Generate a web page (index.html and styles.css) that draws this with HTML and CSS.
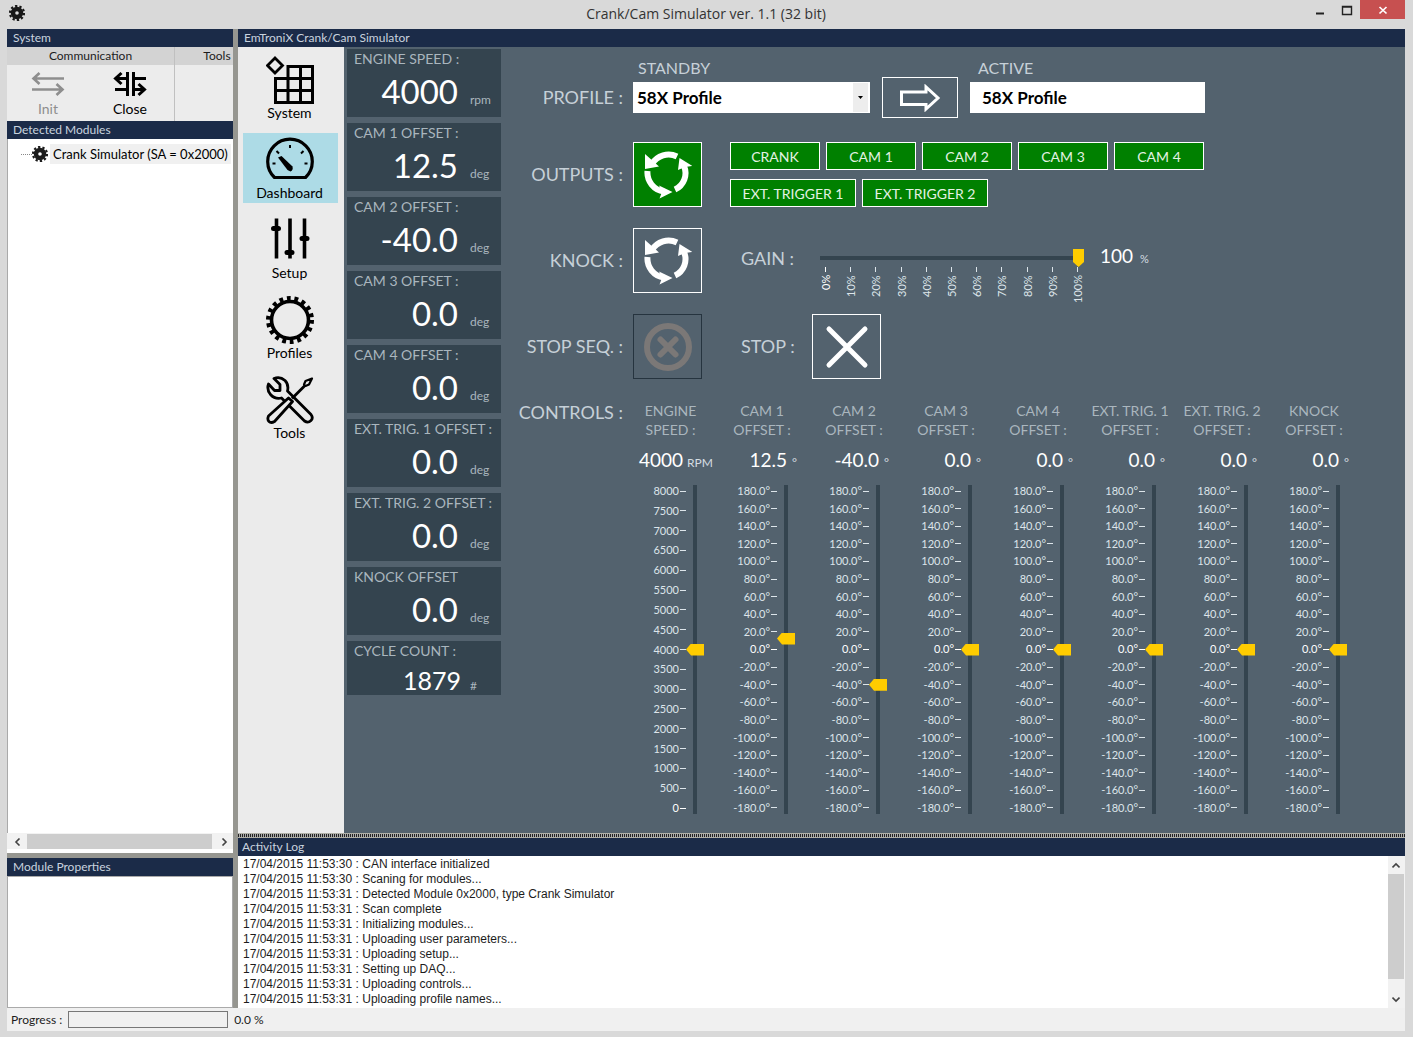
FILE: index.html
```html
<!DOCTYPE html>
<html lang="en">
<head>
<meta charset="utf-8">
<title>Crank/Cam Simulator ver. 1.1 (32 bit)</title>
<link rel="stylesheet" href="styles.css">
</head>
<body class="window">
<svg class="defs" aria-hidden="true">
  <symbol id="i-cog" viewBox="0 0 16 16">
    <circle cx="8" cy="8" r="4" fill="none" stroke="currentColor" stroke-width="4.4"/>
    <circle cx="8" cy="8" r="7" fill="none" stroke="currentColor" stroke-width="2.2" stroke-dasharray="2.3 2.1"/>
  </symbol>
  <symbol id="i-cycle" viewBox="0 0 48 48">
    <g fill="none" stroke="currentColor" stroke-width="6">
      <path d="M33 5.500A19.500 19.500 0 0 0 8 13"/>
      <path d="M3.500 20A19 19 0 0 0 20 40.500"/>
      <path d="M31 38.500A18 18 0 0 0 40 15"/>
    </g>
    <path fill="currentColor" d="M1 3V18L15 15.500L10 11ZM15 34.500L28.500 41L15.500 47.500L18 41ZM35.500 7L48.500 15L41 16L34 19Z"/>
  </symbol>
</svg>

<header class="titlebar">
  <svg class="app-icon" width="16" height="16"><use href="#i-cog"/></svg>
  <h1 class="title">Crank/Cam Simulator ver. 1.1 (32 bit)</h1>
  <div class="window-buttons">
    <button class="wbtn" aria-label="Minimize"><svg width="12" height="12"><path d="M2 9.500H10" stroke="#222" stroke-width="2"/></svg></button>
    <button class="wbtn" aria-label="Maximize"><svg width="12" height="12"><path d="M1.500 2.500H10.500V10.500H1.500ZM1 3H11" fill="none" stroke="#222" stroke-width="1.400"/></svg></button>
    <button class="wbtn wbtn-close" aria-label="Close window"><svg width="12" height="12"><path d="M2.500 3L9.500 9.500M9.500 3L2.500 9.500" stroke="#fff" stroke-width="1.700"/></svg></button>
  </div>
</header>

<div class="workspace">
  <aside class="left">
    <h2 class="bar">System</h2>
    <div class="toolbar">
      <section class="tool-group tool-comm">
        <h3 class="tool-title">Communication</h3>
        <div class="tool-row">
          <button class="tool" disabled>
            <svg width="34" height="28" viewBox="0 0 34 28"><path d="M2 8.500H33M8.500 3L2.500 8.500L8.500 14M1 19.500H32M25.500 14L31.500 19.500L25.500 25" fill="none" stroke="currentColor" stroke-width="2.600"/></svg>
            Init
          </button>
          <button class="tool">
            <svg width="34" height="28" viewBox="0 0 34 28"><path d="M2 8.500H14M8.500 3L2.500 8.500L8.500 14M2 19.500H14M14.500 2V26M20.500 2V26M20 8.500H33M20 19.500H31M25.500 14L31.500 19.500L25.500 25" fill="none" stroke="currentColor" stroke-width="3"/></svg>
            Close
          </button>
        </div>
      </section>
      <section class="tool-group tool-more">
        <h3 class="tool-title">Tools</h3>
      </section>
    </div>
    <h2 class="bar">Detected Modules</h2>
    <div class="tree">
      <div class="tree-item">
        <span class="tree-line"></span>
        <svg width="16" height="16"><use href="#i-cog"/></svg>
        <span class="tree-text">Crank Simulator (SA = 0x2000)</span>
      </div>
    </div>
    <div class="hscroll">
      <button class="sbtn" aria-label="Scroll left"><svg width="8" height="8"><path d="M5.500 .5L2 4L5.500 7.500" fill="none" stroke="#444" stroke-width="1.600"/></svg></button>
      <div class="hthumb"></div>
      <button class="sbtn" aria-label="Scroll right"><svg width="8" height="8"><path d="M2.500 .5L6 4L2.500 7.500" fill="none" stroke="#444" stroke-width="1.600"/></svg></button>
    </div>
    <div class="hsplit"></div>
    <h2 class="bar">Module Properties</h2>
    <div class="props"></div>
  </aside>

  <div class="right">
    <h2 class="bar bar-main">EmTroniX Crank/Cam Simulator</h2>
    <main class="module">
      <nav class="nav">
        <a class="nav-item" href="#system">
          <svg width="48" height="48" viewBox="0 0 48 48" fill="none" stroke="currentColor"><path d="M9 2L16.500 9.500L9 17L1.500 9.500Z" stroke-width="2.800"/><path d="M22 10.500H46.500V47M10 22.500H46.500M10 34.500H46.500M22 9V47M34.500 10V47M9.500 21V47M8 46.500H48" stroke-width="3"/></svg>
          System</a>
        <a class="nav-item nav-active" href="#dashboard" aria-current="page">
          <svg width="48" height="48" viewBox="0 0 48 48" fill="none" stroke="currentColor"><path d="M8.500 41.500A22.300 22.300 0 1 1 39.500 41.500Z" stroke-width="3.200" stroke-linejoin="round"/><path d="M6.500 27.500H9.500M38.500 27.500H41.500M24 9V12M10.500 15L13 17.500M37.500 15L35 17.500" stroke-width="2"/><path d="M12 21.500L15.500 20L26.500 30.500Q27.500 34 24.500 35.500L21.500 34Z" fill="currentColor" stroke="none"/></svg>
          Dashboard</a>
        <a class="nav-item" href="#setup">
          <svg width="48" height="48" viewBox="0 0 48 48" stroke="currentColor"><path d="M10.500 2.500V42.500M24 2.500V42.500M38.500 2.500V42.500" stroke-width="3.600"/><path d="M7.500 12.500H12.500M21 36.500H26M36 22.500H41" stroke-width="5" stroke-linecap="round"/></svg>
          Setup</a>
        <a class="nav-item" href="#profiles">
          <svg width="48" height="48" viewBox="0 0 48 48" fill="none" stroke="currentColor"><circle cx="24" cy="24" r="18.500" stroke-width="3.600"/><circle cx="24" cy="24" r="21.500" stroke-width="5" stroke-dasharray="3.755 3.750"/></svg>
          Profiles</a>
        <a class="nav-item" href="#tools">
          <svg width="48" height="48" viewBox="0 0 48 48" fill="none" stroke="currentColor" stroke-width="2.800" stroke-linejoin="round"><path d="M8 2.500Q14 0 19 4.500Q23 8.500 21.500 15L45 38.500Q47.500 42 45 44.500Q42 47.500 38.500 45L15.500 22Q9 23.500 4.500 18.500Q.5 13.500 2.500 8L8.500 14.500H14V8.500Z"/><path d="M46 2.500L39.500 5L38 8.500L39.500 10L43 8.500Z" stroke-width="2.200"/><path d="M39 9.500L26 22.500" /><path d="M22.500 22L2.500 40Q1 43.500 3 45.500Q5 47.500 8.500 45.500L26.500 25.500Z" fill="#ebebeb"/></svg>
          Tools</a>
      </nav>

      <div class="readouts">
        <section class="card"><h3>ENGINE SPEED :</h3><p><output>4000</output><small>rpm</small></p></section>
        <section class="card"><h3>CAM 1 OFFSET :</h3><p><output>12.5</output><small>deg</small></p></section>
        <section class="card"><h3>CAM 2 OFFSET :</h3><p><output>-40.0</output><small>deg</small></p></section>
        <section class="card"><h3>CAM 3 OFFSET :</h3><p><output>0.0</output><small>deg</small></p></section>
        <section class="card"><h3>CAM 4 OFFSET :</h3><p><output>0.0</output><small>deg</small></p></section>
        <section class="card"><h3>EXT. TRIG. 1 OFFSET :</h3><p><output>0.0</output><small>deg</small></p></section>
        <section class="card"><h3>EXT. TRIG. 2 OFFSET :</h3><p><output>0.0</output><small>deg</small></p></section>
        <section class="card"><h3>KNOCK OFFSET</h3><p><output>0.0</output><small>deg</small></p></section>
        <section class="card card-count"><h3>CYCLE COUNT :</h3><p><output>1879</output><small>#</small></p></section>
      </div>

      <div class="dash">
        <div class="line line-profile">
          <span class="label">PROFILE :</span>
          <div class="profile">
            <label class="caption" for="standby">STANDBY</label>
            <label class="caption caption-active" for="active">ACTIVE</label>
            <div class="combo">
              <select id="standby" class="field"><option>58X Profile</option></select>
              <span class="combo-arrow"><svg width="5" height="3"><path d="M0 0H5L2.500 3Z"/></svg></span>
            </div>
            <button class="box box-apply" aria-label="Apply profile"><svg width="42" height="28" viewBox="0 0 42 28"><path d="M2.500 8H27V3L39 14L27 25V20.500H2.500Z" fill="none" stroke="currentColor" stroke-width="3"/></svg></button>
            <input id="active" class="field field-active" readonly value="58X Profile">
          </div>
        </div>

        <div class="line">
          <span class="label">OUTPUTS :</span>
          <button class="box box-on" aria-label="Outputs"><svg width="48" height="48"><use href="#i-cycle"/></svg></button>
          <div class="chips">
            <button class="chip">CRANK</button><button class="chip">CAM 1</button><button class="chip">CAM 2</button><button class="chip">CAM 3</button><button class="chip">CAM 4</button>
            <button class="chip chip-wide">EXT. TRIGGER 1</button><button class="chip chip-wide">EXT. TRIGGER 2</button>
          </div>
        </div>

        <div class="line line-knock">
          <span class="label">KNOCK :</span>
          <button class="box" aria-label="Knock"><svg width="48" height="48"><use href="#i-cycle"/></svg></button>
          <div class="gain">
            <label class="side" for="gain">GAIN :</label>
            <div class="gain-scale">
              <input id="gain" class="hslider" type="range" min="0" max="100" value="100">
              <ol class="hticks"></ol>
            </div>
            <p class="gain-value"><output>100</output><small>%</small></p>
          </div>
        </div>

        <div class="line">
          <span class="label">STOP SEQ. :</span>
          <button class="box box-off" disabled aria-label="Stop sequence"><svg width="48" height="48" viewBox="0 0 48 48" fill="none" stroke="currentColor"><circle cx="24" cy="24" r="21" stroke-width="6"/><path d="M16.500 16.500L31.500 31.500M31.500 16.500L16.500 31.500" stroke-width="6" stroke-linecap="round"/></svg></button>
          <span class="side side-stop">STOP :</span>
          <button class="box" aria-label="Stop"><svg width="48" height="48" viewBox="0 0 48 48"><path d="M6 6L42 42M42 6L6 42" stroke="currentColor" stroke-width="5" stroke-linecap="round"/></svg></button>
        </div>

        <div class="line line-controls">
          <span class="label">CONTROLS :</span>
          <div class="controls"></div>
        </div>
      </div>
    </main>
    <div class="grip"></div>
    <h2 class="bar bar-log">Activity Log</h2>
    <div class="log">
      <ul class="log-lines">
        <li>17/04/2015 11:53:30 : CAN interface initialized</li>
        <li>17/04/2015 11:53:30 : Scaning for modules...</li>
        <li>17/04/2015 11:53:31 : Detected Module 0x2000, type Crank Simulator</li>
        <li>17/04/2015 11:53:31 : Scan complete</li>
        <li>17/04/2015 11:53:31 : Initializing modules...</li>
        <li>17/04/2015 11:53:31 : Uploading user parameters...</li>
        <li>17/04/2015 11:53:31 : Uploading setup...</li>
        <li>17/04/2015 11:53:31 : Setting up DAQ...</li>
        <li>17/04/2015 11:53:31 : Uploading controls...</li>
        <li>17/04/2015 11:53:31 : Uploading profile names...</li>
      </ul>
      <div class="vscroll">
        <button class="sbtn" aria-label="Scroll up"><svg width="8" height="8"><path d="M.5 5.500L4 2L7.500 5.500" fill="none" stroke="#444" stroke-width="1.600"/></svg></button>
        <div class="vthumb"></div>
        <button class="sbtn" aria-label="Scroll down"><svg width="8" height="8"><path d="M.5 2.500L4 6L7.500 2.500" fill="none" stroke="#444" stroke-width="1.600"/></svg></button>
      </div>
    </div>
  </div>
</div>

<footer class="status">
  <label for="progress">Progress :</label>
  <progress id="progress" max="100" value="0"></progress>
  <span>0.0 %</span>
</footer>
<script src="app.js"></script>
</body>
</html>
```

FILE: styles.css
```css
* { box-sizing: border-box; }

:root {
  --navy: #1b2b48;
  --slate: #53626e;
  --dark: #34444f;
  --paper: #ececec;
  --split: #969690;
  --green: #008000;
  --gold: #ffcc00;
}

h1, h2, h3, p, ul, ol { margin: 0; padding: 0; font-weight: 400; list-style: none; }

button {
  padding: 0;
  border: 0;
  background: none;
  font: inherit;
  color: inherit;
}

svg { display: block; flex: none; }
.defs { display: none; }

.window {
  display: flex;
  flex-direction: column;
  min-height: 100vh;
  margin: 0;
  padding: 0 8px 7px 7px;
  background: #d9d9d9;
  font-family: Lato, "Noto Sans", sans-serif;
  font-size: 12px;
  color: #1c1c1c;
}

/* Title bar */
.titlebar {
  display: grid;
  grid-template-columns: 1fr auto 1fr;
  height: 29px;
}
.app-icon { margin: 5px 0 0 2px; color: #181818; }
.title {
  font: 14px/28px "Open Sans", sans-serif;
  color: #333;
}
.window-buttons { display: flex; justify-content: flex-end; align-items: flex-start; }
.wbtn { display: grid; place-items: center; width: 27px; height: 19px; }
.wbtn-close { width: 45px; background: #c75050; }

/* Frame */
.workspace {
  display: grid;
  grid-template-columns: 226px minmax(0, 1fr);
  column-gap: 5px;
  flex: 1;
  background: var(--split);
}
.left, .right { display: flex; flex-direction: column; min-width: 0; }

.bar {
  flex: none;
  height: 18px;
  padding-left: 6px;
  background: var(--navy);
  font-size: 12px;
  line-height: 18px;
  color: #c9d3df;
}
.bar-log { padding-left: 4px; }

.toolbar {
  display: flex;
  height: 74px;
  overflow: hidden;
  background: var(--paper);
}
.tool-group { flex: none; }
.tool-comm { width: 168px; border-right: 1px solid #c0c0c0; }
.tool-more { width: 84px; }
.tool-title { background: #d3d3d3; font-size: 12px; line-height: 18px; text-align: center; }
.tool-row { display: flex; }
.tool {
  display: flex;
  flex-direction: column;
  align-items: center;
  gap: 2px;
  width: 82px;
  padding-top: 5px;
  font-size: 14px;
  line-height: 18px;
  color: #000;
}
.tool:disabled { color: #8e8e8e; }

.tree { flex: 1; border-left: 1px solid #aaa; background: #fff; overflow: hidden; }
.tree-item { display: flex; align-items: center; margin: 5px 0 0 13px; height: 20px; }
.tree-line { flex: none; width: 11px; border-top: 1px dotted #888; }
.tree-text {
  margin-left: 2px;
  padding: 0 3px;
  background: #f0f0f0;
  font-size: 13px;
  line-height: 20px;
  white-space: nowrap;
  color: #000;
}

.sbtn { display: grid; place-items: center; width: 16px; height: 16px; flex: none; }
.hscroll { display: flex; height: 20px; padding: 1px 1px 0 3px; background: #f2f2f2; border-bottom: 4px solid #fff; }
.hthumb { flex: 1; background: #cdcdcd; margin: 0 4px 0 1px; }
.hsplit { height: 5px; }
.props { height: 132px; border: 1px solid #aaa; background: #fff; }

/* Module */
.module {
  display: grid;
  grid-template-columns: 106px 154px minmax(0, 1fr);
  column-gap: 3px;
  flex: 1;
  background: var(--slate);
}

.nav {
  display: flex;
  flex-direction: column;
  gap: 10px;
  padding: 6px 6px 0 5px;
  background: #ebebeb;
}
.nav-item {
  display: flex;
  flex-direction: column;
  align-items: center;
  height: 70px;
  padding: 3px 2px 0 0;
  font-size: 14px;
  line-height: 17px;
  color: #000;
  text-decoration: none;
}
.nav-active { background: #addbe6; }

.readouts { display: flex; flex-direction: column; gap: 6px; padding-top: 2px; }
.card { height: 68px; padding: 0 6px 0 7px; background: var(--dark); }
.card h3 { font-size: 14px; line-height: 20px; white-space: nowrap; color: #aab6be; }
.card p { display: flex; align-items: baseline; line-height: 44px; }
.card output { width: 104px; text-align: right; font-size: 33px; color: #fff; }
.card small { margin-left: 12px; font-size: 12px; color: #aab6be; }
.card-count { height: 54px; }
.card-count p { line-height: 38px; }
.card-count output { width: 107px; font-size: 25px; }
.card-count small { margin-left: 9px; }

.dash { padding: 11px 0 19px; }
.line { display: flex; margin-bottom: 21px; }
.label {
  flex: none;
  width: 119px;
  margin-right: 10px;
  text-align: right;
  font-size: 18px;
  line-height: 65px;
  color: #c6d0d8;
}

.line-profile { margin-bottom: 24px; }
.line-profile .label { padding-top: 19px; line-height: 41px; }
.line-knock { height: 65px; }
.profile {
  display: grid;
  grid-template-columns: 237px 76px 235px;
  grid-template-rows: 19px 41px;
  column-gap: 12px;
  align-items: center;
}
.caption { padding-left: 5px; font-size: 16px; line-height: 19px; color: #c6d0d8; }
.caption-active { grid-column: 3; padding-left: 8px; }
.combo { display: grid; }
.combo > * { grid-area: 1 / 1; }
.combo-arrow {
  justify-self: end;
  display: grid;
  place-items: center;
  width: 15px;
  margin: 1px 2px;
  background: #ededed;
  pointer-events: none;
}
.field {
  width: 100%;
  height: 31px;
  padding: 0 4px;
  border: 0;
  border-radius: 0;
  appearance: none;
  background: #fff;
  font: bold 17px Lato, "Noto Sans", sans-serif;
  color: #000;
}
.field-active { padding-left: 12px; }

.box {
  display: grid;
  place-items: center;
  flex: none;
  width: 69px;
  height: 65px;
  border: 1px solid #fff;
  color: #fff;
}
.box-apply { width: 76px; height: 41px; }
.box-on { background: var(--green); }
.box-off { border-color: #26343f; color: #7b7877; }

.chips { display: flex; flex-wrap: wrap; align-content: flex-start; gap: 9px 6px; width: 474px; margin-left: 28px; }
.chip {
  width: 90px;
  height: 28px;
  border: 1px solid #fff;
  background: var(--green);
  font-size: 14px;
  color: #e4f2e4;
}
.chip-wide { width: 126px; }

.side { width: 71px; font-size: 18px; line-height: 18px; color: #c6d0d8; }
.side-stop { margin-left: 39px; line-height: 65px; }
.gain { display: flex; align-items: flex-start; margin-left: 39px; padding-top: 21px; }
.gain-scale { width: 264px; margin-left: 8px; }
.gain-value { margin-left: 16px; line-height: 14px; color: #fff; }
.gain-value output { font-size: 19px; }
.gain-value small { margin-left: 7px; font-size: 11px; color: #d5dde2; }

.hslider, .vslider {
  display: block;
  margin: 0;
  appearance: none;
  background: linear-gradient(var(--dark), var(--dark)) center no-repeat;
}
.hslider { width: 264px; height: 18px; background-size: 100% 4px; }
.hslider::-webkit-slider-thumb {
  appearance: none;
  width: 11px;
  height: 18px;
  background: var(--gold);
  clip-path: polygon(0 0, 100% 0, 100% 72%, 50% 100%, 0 72%);
}
.hticks { display: flex; justify-content: space-between; height: 38px; }
.hticks li {
  display: flex;
  justify-content: flex-end;
  width: 12px;
  height: 38px;
  writing-mode: vertical-rl;
  transform: rotate(180deg);
  font-size: 11px;
  line-height: 12px;
  color: #dde5ea;
}
.hticks li::after {
  content: "";
  width: 1px;
  height: 5px;
  margin: 3px auto 0;
  background: currentColor;
}

.line-controls { margin: 22px 0 0; }
.line-controls .label { margin-right: 2px; line-height: 22px; }
.controls { display: flex; }
.control { width: 92px; }
.control-speed { width: 91px; }
.control-name { display: block; height: 38px; font-size: 14px; line-height: 19px; text-align: center; color: #aab6be; }
.control-name span { display: block; }
.control-value { display: flex; align-items: baseline; height: 46px; padding-top: 8px; line-height: 26px; color: #fff; }
.control-value output { width: 71px; text-align: right; font-size: 19px; }
.control-value small { margin-left: 5px; font-size: 12px; color: #d5dde2; }
.control-speed .control-value output { width: 58px; }
.control-speed .control-value small { margin-left: 4px; }
.control-body { display: flex; height: 329px; }
.vticks {
  display: flex;
  flex-direction: column;
  justify-content: space-between;
  width: 61px;
  font-size: 11px;
  line-height: 12px;
  color: #dde5ea;
}
.vticks li { display: flex; justify-content: flex-end; align-items: center; gap: 1px; }
.vticks li::after { content: ""; width: 6px; height: 1px; background: currentColor; }
.vticks .zero, .hticks .zero { color: #fff; }
.vslider {
  width: 18px;
  height: 329px;
  writing-mode: vertical-lr;
  direction: rtl;
  background-size: 4px 100%;
}
.vslider::-webkit-slider-thumb {
  appearance: none;
  width: 18px;
  height: 12px;
  background: var(--gold);
  clip-path: polygon(0 50%, 28% 0, 100% 0, 100% 100%, 28% 100%);
}

/* Log */
.grip {
  height: 5px;
  background: repeating-linear-gradient(90deg, #222 0 1px, #aaa 1px 2px);
  border-top: 1px solid #b0b0a8;
  border-bottom: 1px solid #b0b0a8;
}
.log { display: flex; height: 152px; background: #fff; }
.log-lines { flex: 1; padding: 1px 0 0 5px; font: 12px/15px "Liberation Sans", Arial, sans-serif; }
.vscroll { display: flex; flex-direction: column; width: 17px; padding: 2px 1px 1px 0; background: #f2f2f2; }
.vthumb { flex: 1; margin: 0 0 12px; background: #cdcdcd; }

/* Status bar */
.status { display: flex; align-items: center; gap: 6px; height: 23px; padding-left: 4px; background: #f0f0f0; }
.status progress {
  width: 160px;
  height: 17px;
  border: 1px solid #777;
  appearance: none;
  background: #f0f0f0;
}
.status progress::-webkit-progress-bar { background: #f0f0f0; }
```

FILE: app.js
```javascript
const controls = [
  { name: ["ENGINE", "SPEED :"], value: 4000, unit: "RPM", speed: true },
  { name: ["CAM 1", "OFFSET :"], value: 12.5 },
  { name: ["CAM 2", "OFFSET :"], value: -40 },
  { name: ["CAM 3", "OFFSET :"], value: 0 },
  { name: ["CAM 4", "OFFSET :"], value: 0 },
  { name: ["EXT. TRIG. 1", "OFFSET :"], value: 0 },
  { name: ["EXT. TRIG. 2", "OFFSET :"], value: 0 },
  { name: ["KNOCK", "OFFSET :"], value: 0 }
];

function ticks(min, max, step, format) {
  let html = "";
  for (let v = max; v >= min; v -= step) {
    html += `<li${v === 0 ? ' class="zero"' : ""}>${format(v)}</li>`;
  }
  return html;
}

document.querySelector(".controls").innerHTML = controls.map((c, i) => {
  const min = c.speed ? 0 : -180;
  const max = c.speed ? 8000 : 180;
  const list = c.speed
    ? ticks(min, max, 500, v => v)
    : ticks(min, max, 20, v => v.toFixed(1) + "°");
  return `<section class="control${c.speed ? " control-speed" : ""}">
    <label for="c${i}"><span class="control-name"><span>${c.name[0]}</span><span>${c.name[1]}</span></span></label>
    <p class="control-value"><output>${c.speed ? c.value : c.value.toFixed(1)}</output><small>${c.unit || "°"}</small></p>
    <div class="control-body"><ol class="vticks">${list}</ol>
    <input id="c${i}" class="vslider" type="range" min="${min}" max="${max}" step="0.5" value="${c.value}"></div>
  </section>`;
}).join("");

let gain = "";
for (let v = 0; v <= 100; v += 10) {
  gain += `<li${v === 0 ? ' class="zero"' : ""}>${v}%</li>`;
}
document.querySelector(".hticks").innerHTML = gain;
```
